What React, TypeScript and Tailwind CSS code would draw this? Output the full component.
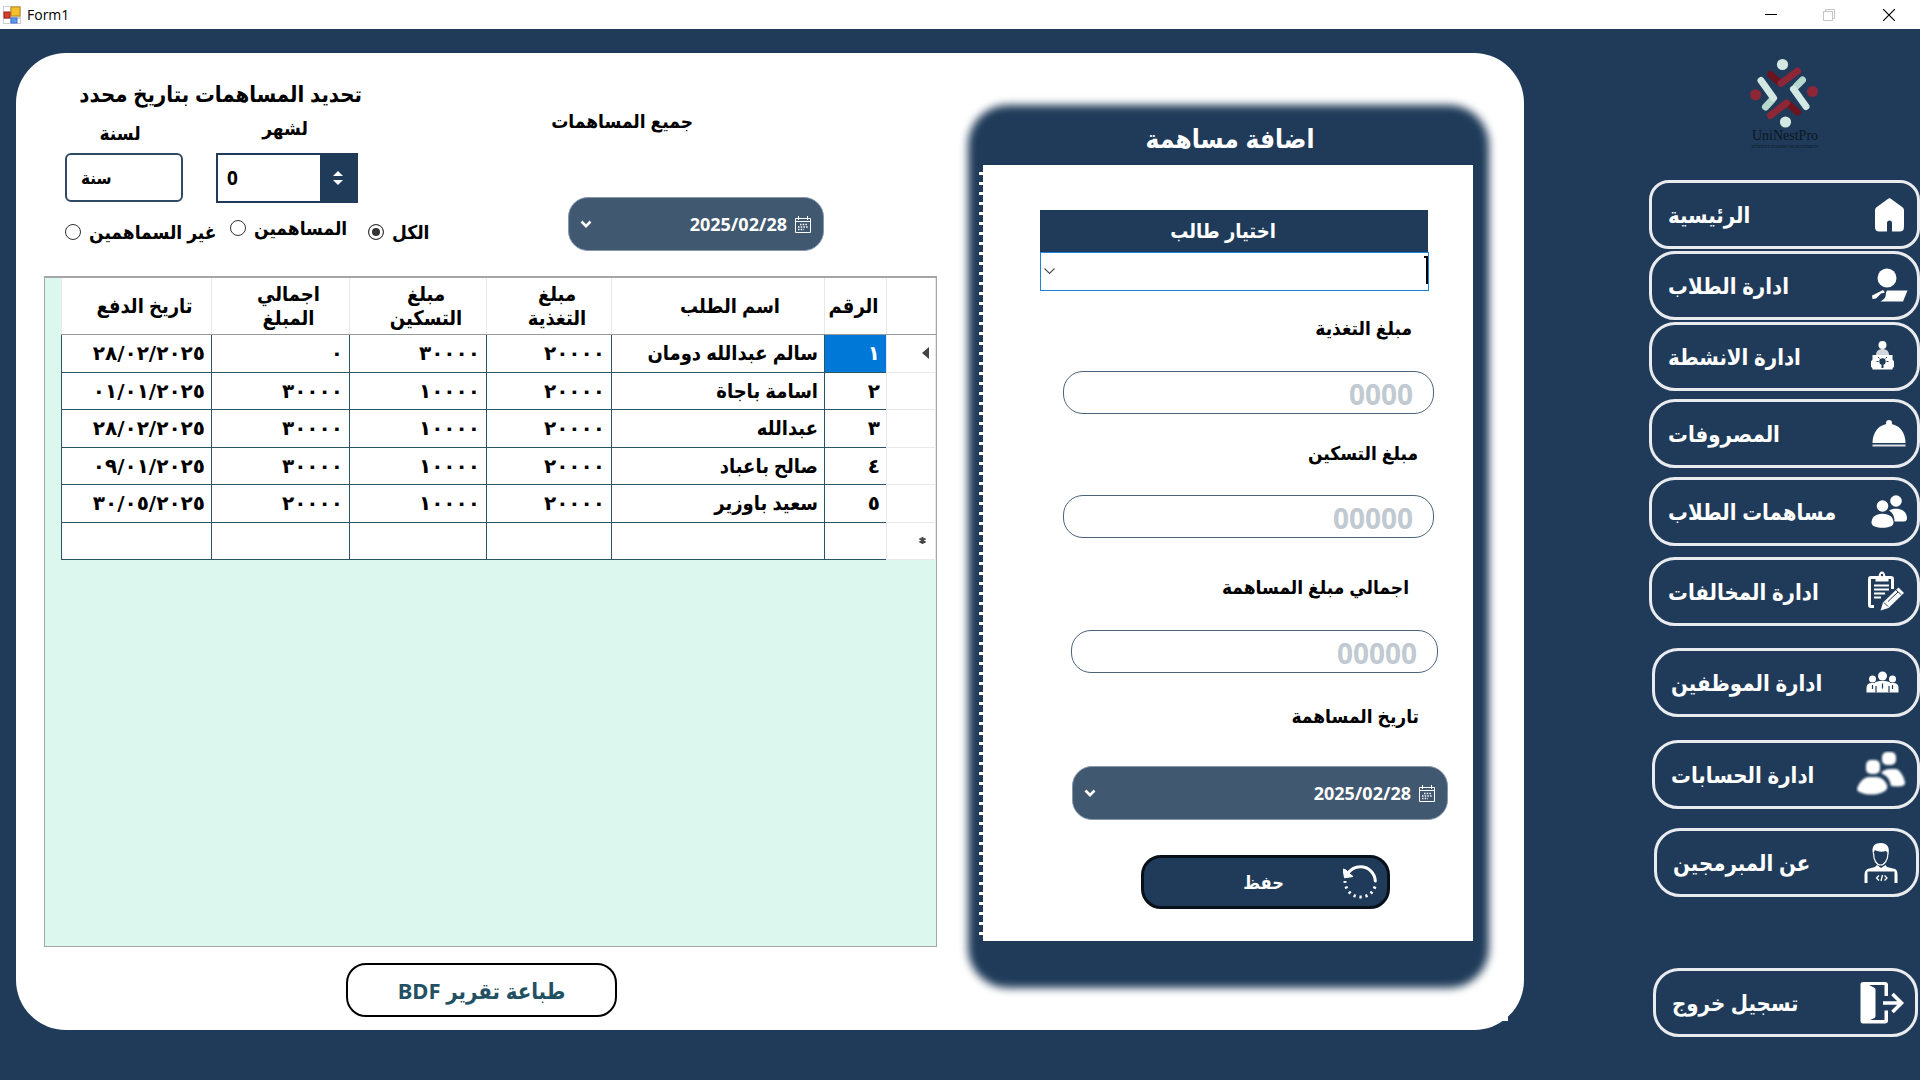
import React, { useState } from "react";

const navy = "#1f3b59";

/* ---------- icons ---------- */

const FormIcon = () => (
  <svg width="18" height="18" viewBox="0 0 18 18" aria-hidden="true">
    <rect width="18" height="18" fill="#cfcfd2" />
    <rect x="1" y="1" width="6" height="5" fill="#fff" />
    <rect x="1" y="13" width="6" height="4" fill="#fff" />
    <rect x="14" y="13" width="3" height="4" fill="#fff" />
    <rect x="8" y="1" width="9" height="9" fill="#f3c02c" stroke="#c08a10" />
    <rect x="1" y="6" width="6" height="6" fill="#d5402f" stroke="#a01c14" />
    <rect x="8" y="12" width="6" height="5" fill="#5b9bee" stroke="#3b6fd0" />
  </svg>
);

const CalendarIcon = () => (
  <svg width="16" height="17" viewBox="0 0 16 17" aria-hidden="true" fill="none" stroke="#fff">
    <path d="M.5 2.5h15v14H.5zM.5 5.5h15" />
    <path d="M3.5 0v4M12.500 0v4" />
    <path d="M5 8.500h8M3 11h10M3 13.500h6" strokeDasharray="1.500 1.200" strokeWidth="1.300" />
  </svg>
);

const ChevronIcon = () => (
  <svg width="12" height="9" viewBox="0 0 12 9" aria-hidden="true" fill="none" stroke="#fff" strokeWidth="2.600">
    <path d="M1.500 1.500L6 6.200l4.500-4.700" />
  </svg>
);

const RestoreIcon = () => (
  <svg width="34" height="34" viewBox="0 0 34 34" aria-hidden="true" fill="none" stroke="#fff">
    <path d="M4 9.500C8 3.500 13 1.800 17.500 1.800c8 0 14.300 6 14.800 14.200" strokeWidth="3" strokeLinecap="round" />
    <path d="M0 4l1.500 8.800 8.500-1.300-3-2.500-4-4z" fill="#fff" strokeWidth="1" />
    <path d="M32 21.500C30 28 24.500 32 17.500 32 9 32 2 25 2 16" strokeWidth="3" strokeDasharray="2.200 3.800" />
  </svg>
);

const Logo = () => (
  <svg width="70" height="92" viewBox="1750 58 70 92" role="img" aria-label="UniNestPro" fill="none" strokeLinecap="round" strokeLinejoin="round">
    <g strokeWidth="7">
      <path d="M1770.500 74.500l9 8" stroke="#6b1420" />
      <path d="M1781 83.500l16.500-12.500" stroke="#8d2636" />
      <path d="M1797.500 112l-8-7" stroke="#6b1420" />
      <path d="M1770.500 115.500l16-12.500" stroke="#8d2636" />
      <path d="M1765.500 107l6.500-7" stroke="#b5d8cd" />
      <path d="M1761 80.500l12.500 17.500" stroke="#d3e8e3" />
      <path d="M1802.500 80l-6 6" stroke="#b5d8cd" />
      <path d="M1793.500 89l12.500 17.500" stroke="#d3e8e3" />
    </g>
    <circle cx="1782.500" cy="64.500" r="5.600" fill="#d3e8e3" />
    <circle cx="1785.500" cy="122" r="5.600" fill="#d3e8e3" />
    <circle cx="1755.600" cy="94.800" r="5.600" fill="#8d2636" />
    <circle cx="1812.500" cy="91.500" r="5.600" fill="#8d2636" />
  </svg>
);

const slot = (children: React.ReactNode) => (
  <svg width="56" height="48" viewBox="0 0 56 48" aria-hidden="true" fill="#fff" className="shrink-0">
    {children}
  </svg>
);

const HomeIcon = slot(
  <path d="M31.500 8.200a3 3 0 0 1 4 0l11 8c1.100.9 1.500 1.900 1.500 3.300V36c0 3.200-1.400 4.500-4.500 4.500H36v-8.500a2.500 2.500 0 0 0-5 0v8.500h-7.500c-3.100 0-4.500-1.300-4.500-4.500V19.500c0-1.400.4-2.400 1.500-3.300z" />
);
const StudentIcon = slot(
  <g className="blur-[0.5px]">
    <circle cx="31" cy="16" r="9.500" />
    <path d="M31 28.500h20.500l-4.500 11H24.500c1-1 4-2 5-5 .4-1.500.2-4 1.500-6z" />
    <path d="M16 33.500l11-5.500 2 2.500-4 1-5 5-3.500.5z" />
  </g>
);
const ActivityIcon = slot(
  <>
    <circle cx="26.500" cy="12" r="4" />
    <path d="M20 22c0-4 3-6 6.500-6s6.500 2 6.500 6z" opacity=".8" />
    <path d="M16.500 22h20v4.500l1.500 2v5l-1.500 2V36.500h-20v-1l-1.500-2v-5l1.500-2z" />
    <circle cx="26.500" cy="28.500" r="3.200" fill={navy} />
    <path d="M25.500 31h2v4h-2z" fill={navy} />
    <path d="M20.500 28.500h2M30.500 28.500h2M22 24l1.500 1.500M31 24l-1.500 1.500" stroke={navy} />
  </>
);
const DishIcon = slot(
  <>
    <circle cx="33" cy="13" r="3" />
    <path d="M16.500 33c0-11 6.500-19 16.500-19s16.500 8 16.500 19z" />
    <path d="M16.500 34.500h33v2h-33z" opacity=".85" />
  </>
);
const PeopleIcon = slot(
  <>
    <circle cx="40" cy="13" r="5.800" />
    <path d="M33 22.500c2-1.200 4-1.700 7-1.700 7 0 11 4 11 9.500 0 2-.8 3.200-3 3.200h-9.500c0-5-1.500-8.500-5.500-11z" />
    <circle cx="26.500" cy="18" r="5.800" />
    <path d="M15.500 34.500c0-5 4-8.700 11-8.700s11 3.700 11 8.700c0 4-5 5.200-11 5.200s-11-1.200-11-5.200z" />
  </>
);
const ClipboardIcon = slot(
  <>
    <path d="M18 38.500h-3c-1 0-1.500-.5-1.500-1.500V11c0-1 .5-1.500 1.500-1.500h20c1 0 1.500.5 1.500 1.500v10" fill="none" stroke="#fff" strokeWidth="3" />
    <path d="M19.500 13.500v-5h3c.3-3 1.500-5 3.500-5s3.200 2 3.500 5h3v5z" />
    <circle cx="26" cy="7" r="1.200" fill={navy} />
    <path d="M18 17.500h15M18 21.500h15M18 25.500h11M18 29.500h7" stroke="#fff" strokeWidth="2" />
    <path d="M24.500 42.500l2.500-8L42.500 19.500l5.500 5.500L32.500 40z" />
    <path d="M28 34.500l4 4M32 33.500l10-9.500M40 22l5.500 5" stroke={navy} strokeWidth="1" />
  </>
);
const TeamIcon = slot(
  <>
    <circle cx="26.500" cy="17" r="4.500" />
    <circle cx="16.500" cy="20" r="3.500" />
    <circle cx="36.500" cy="20" r="3.500" />
    <path d="M10.500 33.500v-5c0-3 2-4.500 5-4.500h3c1.500-1.500 3.500-2 8-2s6.500.5 8 2h3c3 0 5 1.500 5 4.500v5z" />
    <path d="M16.500 26v4M36.500 26v4M26.500 24.500v5M20 27v6.500M33 27v6.500" stroke={navy} strokeWidth="1.200" />
  </>
);
const AccountsIcon = slot(
  <g className="blur-[1px]">
    <rect x="26" y="1" width="14" height="13" rx="5" />
    <path d="M25 22c3-3 5-4 9-4h6c4 0 9 10 9 14 0 3-4 4-14 3-1-7-4-10-10-13z" />
    <rect x="10" y="9" width="14" height="14" rx="5" />
    <path d="M1 38c2-7 7-12 12-12h7c5 0 9 3 11 8 1 4-1 6-6 8-6 2-14 2-19 0-3-1-5-2-5-4z" />
  </g>
);
const DeveloperIcon = slot(
  <>
    <path d="M18 15c-2-8 2-11 8-11s9 4 7.500 11l-2.500-3c-4 1-8 1-11-1z" />
    <path d="M18.500 14c0 7 3 12 7 12s7.500-5 7.500-12" fill="none" stroke="#fff" strokeWidth="1.200" />
    <path d="M22 26l4 3 4.500-3 1.500 2 8 2c2 1 2.500 3 2.500 6v8h-3v-11.500h-27v11.500h-3v-8c0-3 1-5 3-6l7.500-2z" />
    <path d="M24 36.500l-2.500 2.500 2.500 2.500M29.500 36.500l2.500 2.500-2.500 2.500M27.500 36l-1.500 6" fill="none" stroke="#fff" strokeWidth="1.300" />
  </>
);
const LogoutIcon = slot(
  <>
    <path d="M6.500 5.500c0-1.300.8-2.500 2.500-2.500h22c1.700 0 3 1 3 2.500V17h-3.500V6H15l5 2.500c1 .6 1.500 1.300 1.500 2.500v26c0 1-.4 1.600-1.500 2.200L16 41h14.500v-9.500H34V42c0 1.500-1.300 2.500-3 2.500H9c-1.700 0-2.500-1-2.500-2.500z" />
    <path d="M29 24h18M38.500 15l9 9-9 9" fill="none" stroke="#fff" strokeWidth="3.600" />
  </>
);

/* ---------- data ---------- */

const nav = [
  { label: "الرئيسية", icon: HomeIcon, cls: "rounded-[20px]" },
  { label: "ادارة الطلاب", icon: StudentIcon, cls: "mt-[2px] rounded-[26px]" },
  { label: "ادارة الانشطة", icon: ActivityIcon, cls: "mt-[2px] rounded-[26px]" },
  { label: "المصروفات", icon: DishIcon, cls: "mt-2 rounded-[26px]" },
  { label: "مساهمات الطلاب", icon: PeopleIcon, cls: "mt-[9px] rounded-[26px]" },
  { label: "ادارة المخالفات", icon: ClipboardIcon, cls: "mt-[11px] rounded-[26px]" },
  { label: "ادارة الموظفين", icon: TeamIcon, cls: "mt-[22px] ml-[3px] rounded-[26px]" },
  { label: "ادارة الحسابات", icon: AccountsIcon, cls: "mt-[23px] ml-[3px] rounded-[26px]" },
  { label: "عن المبرمجين", icon: DeveloperIcon, cls: "mt-[19px] ml-[5px] mr-px rounded-[26px]" },
  { label: "تسجيل خروج", icon: LogoutIcon, cls: "mt-[71px] ml-1 mr-[2px] rounded-[26px]" },
];

const rows = [
  ["١", "سالم عبدالله دومان", "٢٠٠٠٠", "٣٠٠٠٠", "٠", "٢٨/٠٢/٢٠٢٥"],
  ["٢", "اسامة باجاة", "٢٠٠٠٠", "١٠٠٠٠", "٣٠٠٠٠", "٠١/٠١/٢٠٢٥"],
  ["٣", "عبدالله", "٢٠٠٠٠", "١٠٠٠٠", "٣٠٠٠٠", "٢٨/٠٢/٢٠٢٥"],
  ["٤", "صالح باعباد", "٢٠٠٠٠", "١٠٠٠٠", "٣٠٠٠٠", "٠٩/٠١/٢٠٢٥"],
  ["٥", "سعيد باوزير", "٢٠٠٠٠", "١٠٠٠٠", "٢٠٠٠٠", "٣٠/٠٥/٢٠٢٥"],
  ["", "", "", "", "", ""],
];

const headers = ["الرقم", "اسم الطلب", "مبلغ التغذية", "مبلغ التسكين", "اجمالي المبلغ", "تاريخ الدفع"];

/* ---------- parts ---------- */

function DatePicker({ label, className }: { label: string; className: string }) {
  return (
    <div dir="rtl" className={"flex h-[54px] items-center rounded-[20px] border border-[#8798aa] bg-[#405870] pr-3 pl-[11px] " + className}>
      <CalendarIcon />
      <input aria-label={label} defaultValue="2025/02/28" className="ml-2 min-w-0 flex-1 bg-transparent pr-2 text-right text-lg font-bold text-white outline-none" />
      <button type="button" aria-label="فتح التقويم"><ChevronIcon /></button>
    </div>
  );
}

function AmountField({ id, label, placeholder, labelCls, inputCls }: { id: string; label: string; placeholder: string; labelCls: string; inputCls: string }) {
  return (
    <>
      <label htmlFor={id} className={"block text-[19px] leading-8 font-bold " + labelCls}>{label}</label>
      <input id={id} placeholder={placeholder} className={"block h-[43px] rounded-[20px] border border-[#4c637b] px-5 pt-[2px] text-right text-[28px] font-bold outline-none placeholder:text-[#c1c9d1] " + inputCls} />
    </>
  );
}

function ContributionForm() {
  return (
    <section className="relative w-[523px] shrink-0 self-start pr-[18px] pb-[49px] pl-[11px]">
      <div className="absolute inset-y-[2px] right-[2px] left-0 rounded-[40px] bg-[#1f3b59] blur-[4px]" />
      <div className="relative">
        <h2 dir="rtl" className="flex h-[62px] items-center justify-center pt-2 pl-2 text-[26px] font-bold text-white">اضافة مساهمة</h2>
        <div className="flex">
          <div className="w-1 bg-[repeating-linear-gradient(to_bottom,#1f3b59_0px,#1f3b59_7px,#ffffff_7px,#ffffff_10px)]" />
          <form dir="rtl" className="flex-1 bg-white pt-[45px] pb-8 pl-[57px]" onSubmit={(e) => e.preventDefault()}>
            <label htmlFor="student" className="mr-[45px] flex h-[42px] items-center justify-center bg-[#1f3b59] pr-[22px] text-xl font-bold text-white">اختيار طالب</label>
            <div className="relative mr-[44px]">
              <select id="student" className="block h-[39px] w-full appearance-none border border-[#1c83da] bg-white outline-none"><option></option></select>
              <span className="absolute top-1 right-px h-7 w-[2px] bg-black" />
              <span className="absolute top-1 right-px h-[2px] w-1 bg-black" />
              <svg className="absolute top-4 left-1" width="11" height="7" viewBox="0 0 11 7" fill="none" stroke="#555" strokeWidth="1.200" aria-hidden="true"><path d="M.5.5l5 5 5-5" /></svg>
            </div>
            <AmountField id="food" label="مبلغ التغذية" placeholder="0000" labelCls="mt-[21px] mr-[61px]" inputCls="mt-[27px] mr-[39px] w-[371px]" />
            <AmountField id="housing" label="مبلغ التسكين" placeholder="00000" labelCls="mt-[23px] mr-[55px]" inputCls="mt-[26px] mr-[39px] w-[371px]" />
            <AmountField id="total" label="اجمالي مبلغ المساهمة" placeholder="00000" labelCls="mt-[33px] mr-[64px]" inputCls="mt-[27px] mr-[35px] w-[367px]" />
            <p className="mt-[27px] mr-[54px] text-[19px] leading-8 font-bold">تاريخ المساهمة</p>
            <DatePicker label="تاريخ المساهمة" className="mt-[34px] mr-[25px] w-[376px]" />
            <button type="submit" className="mt-[35px] mr-[83px] flex h-[54px] w-[249px] items-center rounded-[20px] border-3 border-[#08111a] bg-[#1f3b59] pr-[10px] text-lg font-bold text-white">
              <RestoreIcon />
              <span className="flex-1 pr-5 pl-[60px] text-center">حفظ</span>
            </button>
          </form>
        </div>
      </div>
    </section>
  );
}

function Filters() {
  const [who, setWho] = useState("all");
  const radio = "size-4 appearance-none rounded-full border border-[#333] bg-white checked:border-[#333] checked:bg-[#333] checked:shadow-[inset_0_0_0_3px_#fff]";
  return (
    <div className="flex items-start">
      <div className="w-[386px] pt-6 pl-[21px]">
        <p dir="rtl" className="mr-[68px] text-[22px] leading-8 font-bold whitespace-nowrap">تحديد المساهمات بتاريخ محدد</p>
        <div className="flex">
          <div className="w-[118px]">
            <label htmlFor="year" className="mt-2 mb-1 block pr-2 text-center text-[19px] leading-8 font-bold">لسنة</label>
            <input id="year" placeholder="سنة" className="block h-[49px] w-full rounded-md border-2 border-[#2f4a66] px-[14px] text-[17px] font-bold outline-none placeholder:text-black" />
          </div>
          <div className="ml-[33px] w-[142px]">
            <label htmlFor="month" className="mt-[3px] mb-[9px] block pr-1 text-center text-[19px] leading-8 font-bold">لشهر</label>
            <div className="flex h-[50px] border-2 border-[#1f3b59]">
              <input id="month" defaultValue="0" className="min-w-0 flex-1 pl-[9px] text-[19px] font-bold outline-none" />
              <div className="flex w-9 flex-col items-center justify-center gap-1 bg-[#1f3b59]">
                <button type="button" aria-label="زيادة" className="border-x-[5px] border-b-[5px] border-x-transparent border-b-white" />
                <button type="button" aria-label="إنقاص" className="border-x-[5px] border-t-[5px] border-x-transparent border-t-white" />
              </div>
            </div>
          </div>
        </div>
        <div className="mt-[9px] flex items-start text-[19px] leading-8 font-bold whitespace-nowrap">
          <label className="flex w-[165px] items-center gap-2 pt-1"><input type="radio" name="who" checked={who === "none"} onChange={() => setWho("none")} className={radio} />غير السماهمين</label>
          <label className="flex w-[138px] items-center gap-2"><input type="radio" name="who" checked={who === "paid"} onChange={() => setWho("paid")} className={radio} />المساهمين</label>
          <label className="flex items-center gap-2 pt-1"><input type="radio" name="who" checked={who === "all"} onChange={() => setWho("all")} className={radio} />الكل</label>
        </div>
      </div>
      <div className="mt-[52px] ml-[121px]">
        <h2 dir="rtl" className="w-[142px] text-right text-[19px] leading-8 font-bold whitespace-nowrap">جميع المساهمات</h2>
        <DatePicker label="جميع المساهمات" className="mt-[60px] ml-[17px] w-64" />
      </div>
    </div>
  );
}

function Grid() {
  return (
    <div dir="rtl" className="h-[671px] border border-t-2 border-[#a5a5aa] bg-[#dcf7ee]">
      <table className="w-[875px] table-fixed border-collapse bg-white text-xl leading-6 font-bold">
        <colgroup>
          <col className="w-[49px]" /><col className="w-[62px]" /><col className="w-[213px]" /><col className="w-[125px]" /><col className="w-[137px]" /><col className="w-[138px]" /><col />
        </colgroup>
        <thead>
          <tr className="h-14">
            <th className="border-x border-b border-[#e8e8e8] border-b-[#999]" />
            {headers.map((h, i) => (
              <th key={h} className={i === 0 ? "border-x border-b border-[#e8e8e8] border-b-[#999] pr-1" : i === 1 ? "border-x border-b border-[#e8e8e8] border-b-[#999] pl-6" : "border-x border-b border-[#e8e8e8] border-b-[#999] pr-2 pl-6"}>{h}</th>
            ))}
          </tr>
        </thead>
        <tbody>
          {rows.map((r, i) => (
            <tr key={i} className="odd:h-[38px] even:h-[37px]">
              <td className="border border-[#e8e8e8] pr-[6px] text-[#444]">
                {i === 0 && <svg width="7" height="12" viewBox="0 0 7 12" aria-hidden="true"><path d="M7 0v12L0 6z" fill="#444" /></svg>}
                {i === 5 && <svg width="9" height="9" viewBox="0 0 9 9" aria-hidden="true" className="mr-[2px]"><path d="M4.500 1v7M1.500 2.500l6 4M7.500 2.500l-6 4" stroke="#444" strokeWidth="2" /></svg>}
              </td>
              {r.map((c, j) => (
                <td key={j} className={i === 0 && j === 0 ? "border border-[#2a5564] bg-[#0078d7] pr-[6px] font-['DejaVu_Sans',sans-serif] text-white" : j === 1 ? "border border-[#2a5564] pr-[6px] whitespace-nowrap" : "border border-[#2a5564] pr-[6px] font-['DejaVu_Sans',sans-serif] whitespace-nowrap"}>{c}</td>
              ))}
            </tr>
          ))}
        </tbody>
      </table>
    </div>
  );
}

export default function App() {
  return (
    <div className="flex min-h-screen flex-col bg-[#1f3b59] font-['Noto_Sans','DejaVu_Sans_Condensed','DejaVu_Sans',sans-serif] text-black">
      <header className="flex h-[29px] items-center bg-white pl-[3px]">
        <FormIcon />
        <h1 className="ml-[6px] font-['Open_Sans',sans-serif] text-sm">Form1</h1>
        <div className="ml-auto flex">
          <button type="button" aria-label="Minimize" className="flex h-[29px] w-[58px] items-center justify-center"><svg width="12" height="12" viewBox="0 0 12 12" stroke="#000"><path d="M0 5.500h12" /></svg></button>
          <button type="button" aria-label="Restore" disabled className="flex h-[29px] w-[58px] items-center justify-center"><svg width="12" height="12" viewBox="0 0 12 12" stroke="#c4c4c4" fill="none"><path d="M.5 2.500h9v9h-9zM2.500 2.500v-2h9v9h-2" /></svg></button>
          <button type="button" aria-label="Close" className="mr-px flex h-[29px] w-[61px] items-center justify-center"><svg width="12" height="12" viewBox="0 0 12 12" stroke="#000" strokeWidth="1.200"><path d="M0 0l12 12M12 0L0 12" /></svg></button>
        </div>
      </header>
      <div className="flex flex-1 items-start pl-4">
        <main className="relative mt-6 flex flex-1 rounded-[50px] bg-white pr-[33px] pl-7">
          <div className="absolute right-[16px] bottom-[9px] size-5 bg-white" />
          <div className="mr-[31px] min-w-0 flex-1 pb-[13px]">
            <div className="h-[223px]"><Filters /></div>
            <Grid />
            <button type="button" dir="rtl" className="mt-4 ml-[302px] block h-[54px] w-[271px] rounded-[20px] border-2 border-black text-[22px] font-bold text-[#245063]">طباعة تقرير BDF</button>
          </div>
          <div className="pt-[50px]"><ContributionForm /></div>
        </main>
        <nav className="ml-[125px] flex w-[271px] flex-col pt-[29px]">
          <div className="mb-7 ml-[101px] flex h-[94px] w-[70px] flex-col items-center">
            <div className="-mb-[22px] h-[92px]"><Logo /></div>
            <span className="font-['Liberation_Serif',serif] text-[14px] leading-4 text-[#0c1622]">UniNestPro</span>
            <span className="font-['Liberation_Serif',serif] text-[4px] leading-[6px] text-[#0c1622]">STUDENT HOUSING MANAGEMENT</span>
          </div>
          {nav.map((n) => (
            <button key={n.label} type="button" className={"flex h-[69px] shrink-0 items-center justify-between border-3 border-white/90 pr-[5px] pl-4 text-[22px] font-bold text-white " + n.cls}>
              <span dir="rtl" className="whitespace-nowrap">{n.label}</span>
              {n.icon}
            </button>
          ))}
        </nav>
      </div>
    </div>
  );
}
